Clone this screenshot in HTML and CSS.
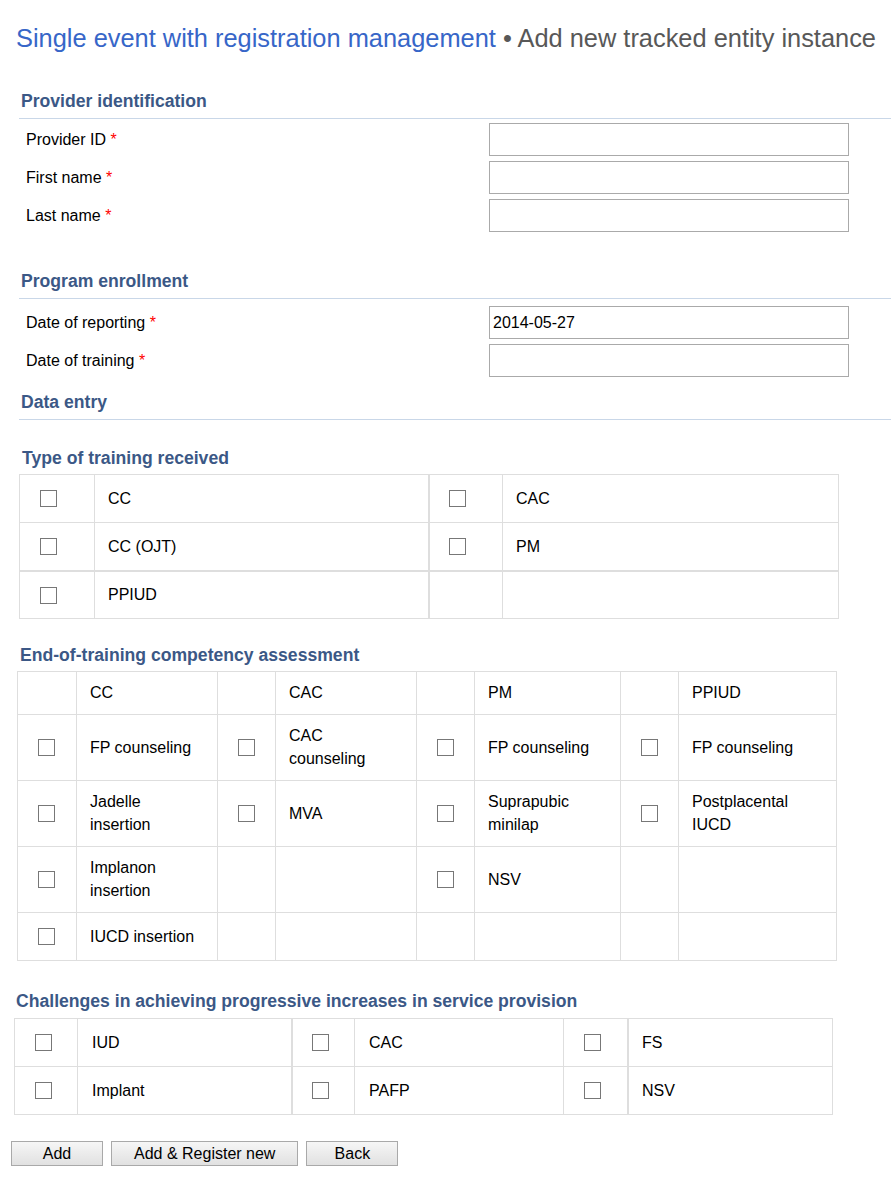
FILE: index.html
```html
<!DOCTYPE html>
<html lang="en">
<head>
<meta charset="utf-8">
<title>Add new tracked entity instance</title>
<link rel="stylesheet" href="styles.css">
</head>
<body>
<h1 class="page-title"><span class="program">Single event with registration management</span> <span class="sub">• Add new tracked entity instance</span></h1>

<section class="sec sec-provider">
  <h2 class="sec-head">Provider identification</h2>
  <div class="fields fields-provider">
    <div class="field"><label class="field-label">Provider ID <span class="req">*</span></label><input class="field-input" type="text"></div>
    <div class="field"><label class="field-label">First name <span class="req">*</span></label><input class="field-input" type="text"></div>
    <div class="field"><label class="field-label">Last name <span class="req">*</span></label><input class="field-input" type="text"></div>
  </div>
</section>

<section class="sec sec-program">
  <h2 class="sec-head">Program enrollment</h2>
  <div class="fields fields-program">
    <div class="field"><label class="field-label">Date of reporting <span class="req">*</span></label><input class="field-input" type="text" value="2014-05-27"></div>
    <div class="field"><label class="field-label">Date of training <span class="req">*</span></label><input class="field-input" type="text"></div>
  </div>
</section>

<section class="sec sec-data">
  <h2 class="sec-head">Data entry</h2>
</section>

<div class="block block-training">
  <h3 class="block-head">Type of training received</h3>
  <div class="grid grid-training">
    <div class="cell cb"><input type="checkbox" class="chk"></div>
    <div class="cell lbl">CC</div>
    <div class="cell cb thick-l"><input type="checkbox" class="chk"></div>
    <div class="cell lbl">CAC</div>

    <div class="cell cb"><input type="checkbox" class="chk"></div>
    <div class="cell lbl">CC (OJT)</div>
    <div class="cell cb thick-l"><input type="checkbox" class="chk"></div>
    <div class="cell lbl">PM</div>

    <div class="cell cb sep-t"><input type="checkbox" class="chk"></div>
    <div class="cell lbl sep-t">PPIUD</div>
    <div class="cell cb thick-l sep-t"></div>
    <div class="cell lbl sep-t"></div>
  </div>
</div>

<div class="block block-assess">
  <h3 class="block-head">End-of-training competency assessment</h3>
  <div class="grid grid-assess">
    <div class="cell cb head"></div>
    <div class="cell lbl head">CC</div>
    <div class="cell cb head"></div>
    <div class="cell lbl head">CAC</div>
    <div class="cell cb head"></div>
    <div class="cell lbl head">PM</div>
    <div class="cell cb head"></div>
    <div class="cell lbl head">PPIUD</div>

    <div class="cell cb"><input type="checkbox" class="chk"></div>
    <div class="cell lbl">FP counseling</div>
    <div class="cell cb"><input type="checkbox" class="chk"></div>
    <div class="cell lbl">CAC counseling</div>
    <div class="cell cb"><input type="checkbox" class="chk"></div>
    <div class="cell lbl">FP counseling</div>
    <div class="cell cb"><input type="checkbox" class="chk"></div>
    <div class="cell lbl">FP counseling</div>

    <div class="cell cb thick-t"><input type="checkbox" class="chk"></div>
    <div class="cell lbl thick-t">Jadelle insertion</div>
    <div class="cell cb thick-t"><input type="checkbox" class="chk"></div>
    <div class="cell lbl thick-t">MVA</div>
    <div class="cell cb thick-t"><input type="checkbox" class="chk"></div>
    <div class="cell lbl thick-t">Suprapubic minilap</div>
    <div class="cell cb thick-t"><input type="checkbox" class="chk"></div>
    <div class="cell lbl thick-t">Postplacental IUCD</div>

    <div class="cell cb thick-t"><input type="checkbox" class="chk"></div>
    <div class="cell lbl thick-t">Implanon insertion</div>
    <div class="cell cb thick-t"></div>
    <div class="cell lbl thick-t"></div>
    <div class="cell cb thick-t"><input type="checkbox" class="chk"></div>
    <div class="cell lbl thick-t">NSV</div>
    <div class="cell cb thick-t"></div>
    <div class="cell lbl thick-t"></div>

    <div class="cell cb"><input type="checkbox" class="chk"></div>
    <div class="cell lbl">IUCD insertion</div>
    <div class="cell cb"></div>
    <div class="cell lbl"></div>
    <div class="cell cb"></div>
    <div class="cell lbl"></div>
    <div class="cell cb"></div>
    <div class="cell lbl"></div>
  </div>
</div>

<div class="block block-challenges">
  <h3 class="block-head">Challenges in achieving progressive increases in service provision</h3>
  <div class="grid grid-challenges">
    <div class="cell cb"><input type="checkbox" class="chk"></div>
    <div class="cell lbl">IUD</div>
    <div class="cell cb thick-l"><input type="checkbox" class="chk"></div>
    <div class="cell lbl">CAC</div>
    <div class="cell cb"><input type="checkbox" class="chk"></div>
    <div class="cell lbl thick-l">FS</div>

    <div class="cell cb"><input type="checkbox" class="chk"></div>
    <div class="cell lbl">Implant</div>
    <div class="cell cb thick-l"><input type="checkbox" class="chk"></div>
    <div class="cell lbl">PAFP</div>
    <div class="cell cb"><input type="checkbox" class="chk"></div>
    <div class="cell lbl thick-l">NSV</div>
  </div>
</div>

<div class="actions">
  <button class="btn" type="button">Add</button>
  <button class="btn" type="button">Add &amp; Register new</button>
  <button class="btn" type="button">Back</button>
</div>
</body>
</html>
```

FILE: styles.css
```css
* { box-sizing: border-box; }

body {
  margin: 0;
  font-family: "Liberation Sans", Arial, sans-serif;
  font-size: 16px;
  color: #000;
  background: #fff;
}

.page-title {
  margin: 0;
  padding: 24px 0 0 16px;
  font-size: 25.4px;
  line-height: 29px;
  font-weight: normal;
  white-space: nowrap;
}
.page-title .program { color: #3766c8; }
.page-title .sub { color: #585858; }

.sec { margin-left: 19px; }
.sec-provider { margin-top: 38px; }
.sec-program { margin-top: 39px; }
.sec-data { margin-top: 15px; }

.sec-head {
  margin: 0;
  padding: 0 0 7px 2px;
  font-size: 17.6px;
  line-height: 20px;
  font-weight: bold;
  color: #3b5886;
  border-bottom: 1px solid #c9d7e8;
}

.fields {
  display: flex;
  flex-direction: column;
  gap: 5px;
}
.fields-provider { padding-top: 4px; }
.fields-program { padding-top: 7px; }

.field {
  display: flex;
  align-items: center;
  height: 33px;
}
.field-label {
  width: 470px;
  padding-left: 7px;
  line-height: 20px;
}
.req { color: #f00; }

.field-input {
  width: 360px;
  height: 33px;
  margin: 0;
  padding: 0 3px;
  border: 1px solid #aaa;
  border-radius: 0;
  font-family: "Liberation Sans", Arial, sans-serif;
  font-size: 16px;
  color: #000;
  background: #fff;
}

.block-head {
  margin: 0 0 6px 0;
  padding-left: 3px;
  font-size: 17.6px;
  line-height: 20px;
  font-weight: bold;
  color: #3b5886;
  white-space: nowrap;
}

.block-training { margin: 28px 0 0 19px; }
.block-assess { margin: 26px 0 0 17px; }
.block-challenges { margin: 30px 0 0 14px; }
.block-challenges .block-head { margin-bottom: 7px; padding-left: 2px; }

.grid {
  display: grid;
  width: max-content;
  border-top: 1px solid #dedede;
  border-left: 1px solid #dedede;
}
.grid-training { grid-template-columns: 75px 334px 74px 336px; }
.grid-assess { grid-template-columns: 59px 141px 58px 141px 58px 146px 58px 158px; }
.grid-challenges { grid-template-columns: 63px 214px 63px 209px 64px 205px; }

.cell {
  display: flex;
  align-items: center;
  min-height: 48px;
  border-right: 1px solid #dedede;
  border-bottom: 1px solid #dedede;
}
.cell.cb { padding-left: 20px; }
.cell.lbl {
  padding: 9px 14px 10px 13px;
  line-height: 23px;
}
.grid-challenges .cell.lbl { padding-left: 14px; }
.cell.head { min-height: 43px; }

.thick-l { box-shadow: inset 1px 0 0 #dedede; }
.thick-t { border-top: 1px solid #dedede; margin-top: -1px; }
.sep-t { border-top: 1px solid #dedede; }

.chk {
  -webkit-appearance: none;
  appearance: none;
  width: 17px;
  height: 17px;
  margin: 0;
  border: 1px solid #777;
  border-radius: 0;
  background: #fff;
}

.actions {
  display: flex;
  gap: 8px;
  margin: 26px 0 0 11px;
}
.btn {
  min-width: 92px;
  height: 25px;
  padding: 0 22px;
  font-family: "Liberation Sans", Arial, sans-serif;
  font-size: 16px;
  line-height: 23px;
  color: #000;
  border: 1px solid #a9a9a9;
  border-radius: 0;
  background: linear-gradient(#f6f6f6, #e1e1e1);
}
```
